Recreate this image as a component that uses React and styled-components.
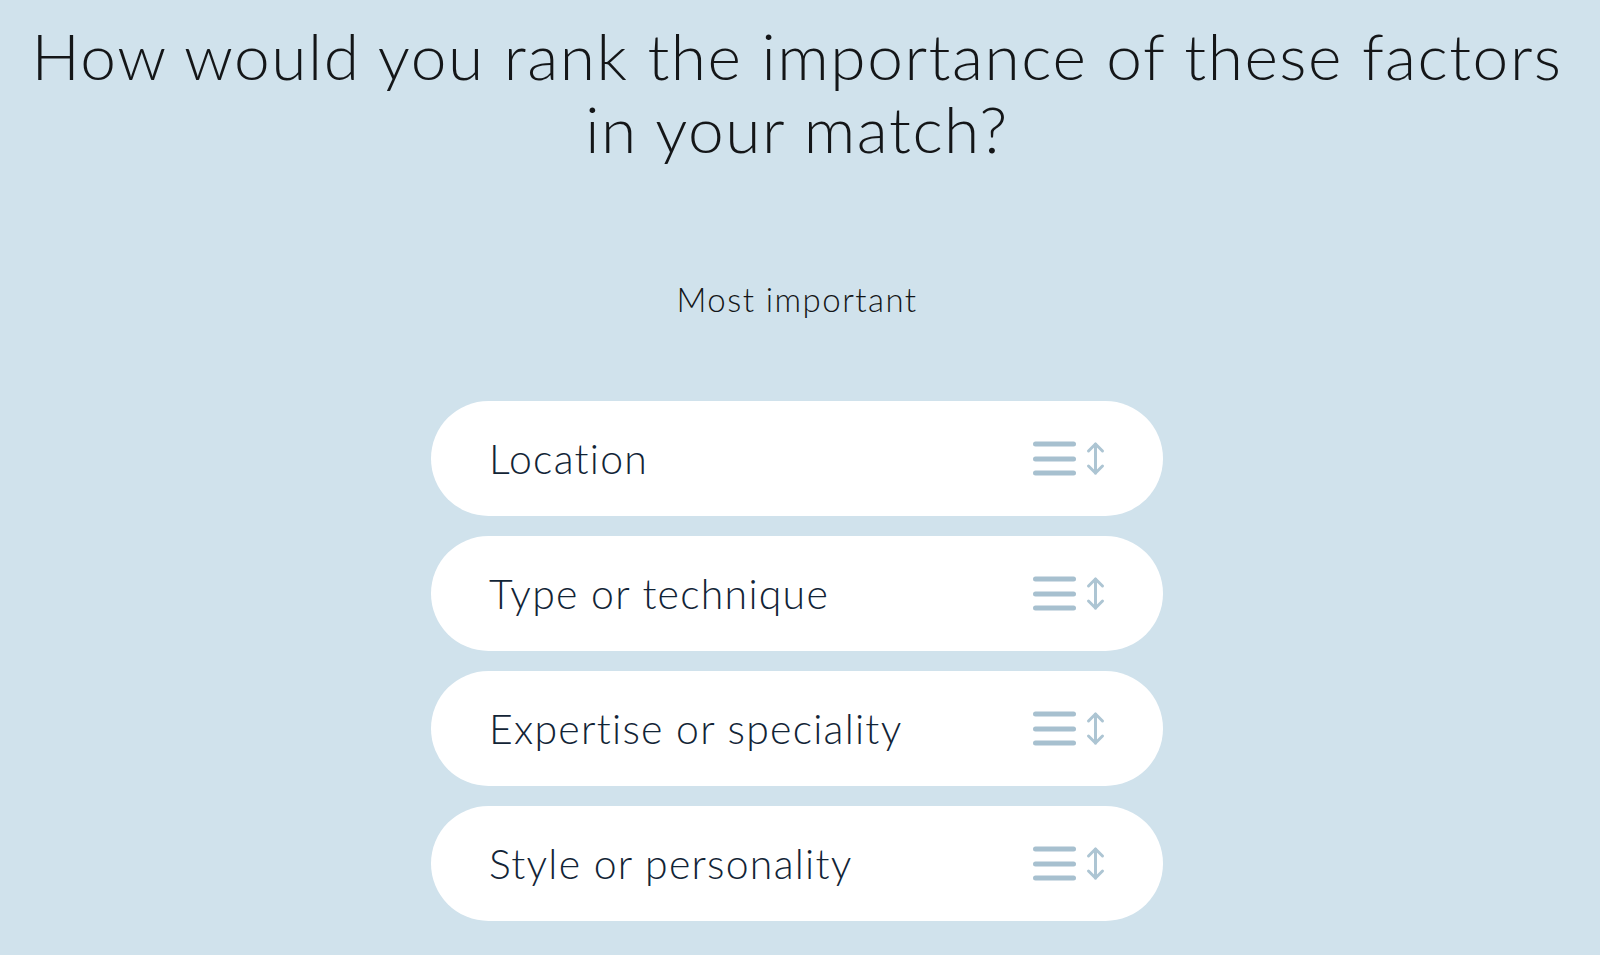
import React from "react";
import styled, { createGlobalStyle } from "styled-components";

const Global = createGlobalStyle`
  html, body { margin: 0; padding: 0; background: #d0e2ec; }
  body { font-family: Lato, "Open Sans", sans-serif; }
`;

const Page = styled.main`
  min-height: 955px;
  box-sizing: border-box;
  padding: 19px 6px 0 0;
  display: flex;
  flex-direction: column;
  align-items: center;
`;

const Title = styled.h1`
  margin: 0;
  font-weight: 300;
  font-size: 64px;
  line-height: 73px;
  color: #141618;
  text-align: center;
  letter-spacing: 1.55px;
`;

const Label = styled.div`
  margin-top: 114px;
  font-size: 33px;
  font-weight: 300;
  line-height: 40px;
  color: #141618;
  letter-spacing: 1.45px;
`;

const List = styled.ul`
  list-style: none;
  margin: 82px 0 0;
  padding: 0;
  display: flex;
  flex-direction: column;
  gap: 20px;
`;

const Card = styled.li`
  width: 732px;
  height: 115px;
  box-sizing: border-box;
  background: #ffffff;
  border-radius: 58px;
  padding: 0 58px 0 58px;
  display: flex;
  align-items: center;
  justify-content: space-between;
`;

const CardText = styled.span`
  font-size: 41px;
  font-weight: 300;
  color: #122436;
  letter-spacing: 1.25px;
`;

const Handle = () => (
  <svg width="72" height="35" viewBox="0 0 72 35" fill="none">
    <g stroke="#a7c0cf" strokeWidth="5" strokeLinecap="round">
      <line x1="2.5" y1="3" x2="40.5" y2="3" />
      <line x1="2.5" y1="18" x2="40.5" y2="18" />
      <line x1="2.5" y1="32" x2="40.5" y2="32" />
    </g>
    <g stroke="#adc5d3" strokeWidth="3" strokeLinecap="round" strokeLinejoin="round">
      <line x1="62.5" y1="3" x2="62.5" y2="32" />
      <polyline points="55.5,10 62.5,3 69.5,10" />
      <polyline points="55.5,25 62.5,32 69.5,25" />
    </g>
  </svg>
);

const items = ["Location", "Type or technique", "Expertise or speciality", "Style or personality"];

export default function App() {
  return (
    <>
      <Global />
      <Page>
        <Title>
          How would you rank the importance of these factors
          <br />
          in your match?
        </Title>
        <Label>Most important</Label>
        <List>
          {items.map((t) => (
            <Card key={t}>
              <CardText>{t}</CardText>
              <Handle />
            </Card>
          ))}
        </List>
      </Page>
    </>
  );
}
